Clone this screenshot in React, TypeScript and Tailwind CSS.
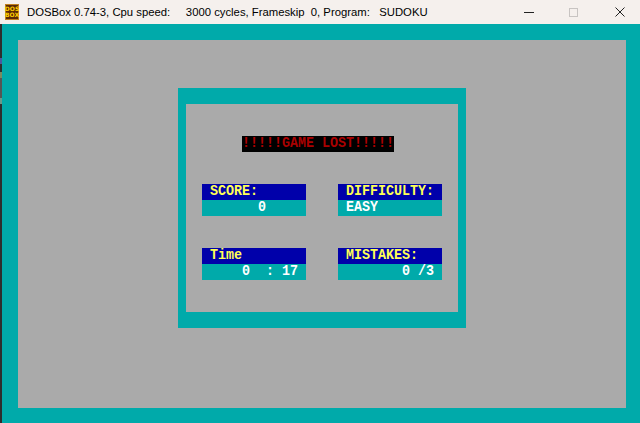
import React from "react";

function T({ children }: { children: React.ReactNode }) {
  return <span className="inline-block h-4 scale-y-[1.13] origin-center">{children}</span>;
}

function Field({ label, value }: { label: string; value: string }) {
  return (
    <div className="w-[104px] flex flex-col">
      <div className="h-4 bg-[#0000aa] text-[#ffff55] leading-4 whitespace-pre"><T>{label}</T></div>
      <div className="h-4 bg-[#00aaaa] text-white leading-4 whitespace-pre"><T>{value}</T></div>
    </div>
  );
}

export default function App() {
  return (
    <div className="w-[640px] h-[423px] overflow-hidden flex flex-col bg-[#00aaaa]">
      <div className="h-6 shrink-0 bg-[#f5f0ed] flex items-center font-['Liberation_Sans',Arial,sans-serif] text-[11.3px] text-black">
        <div className="ml-[5px] w-[14px] h-[16px] bg-[#5a2a06] border border-[#c08020] flex flex-col items-center justify-center leading-[6px] text-[6px] font-bold text-[#ffd000] font-['DejaVu_Sans',sans-serif]">
          <span>DOS</span>
          <span>BOX</span>
        </div>
        <span className="ml-[8px] whitespace-pre">DOSBox 0.74-3, Cpu speed:     3000 cycles, Frameskip  0, Program:   SUDOKU</span>
        <div className="ml-auto flex items-center">
          <div className="w-[10px] h-px bg-[#222]" />
          <div className="ml-[35px] w-[9px] h-[9px] border border-[#c8c4c2]" />
          <svg className="ml-[37px] mr-[15px]" width="10" height="10" viewBox="0 0 10 10">
            <path d="M0.5 0.5 L9.5 9.5 M9.5 0.5 L0.5 9.5" stroke="#222" strokeWidth="1" />
          </svg>
        </div>
      </div>
      <div className="flex-1 flex">
        <div className="w-[2px] bg-[#2e2e2e] flex flex-col">
          <div className="h-[34px]" />
          <div className="h-[6px] bg-[#4a5aa0]" />
          <div className="h-[8px]" />
          <div className="h-[6px] bg-[#7a8a60]" />
          <div className="h-[20px] bg-[#555]" />
          <div className="h-[6px] bg-[#6a9a8a]" />
        </div>
        <div className="flex-1 flex pl-4 pt-4 pr-[14px] pb-[15px]">
          <div className="flex-1 bg-[#aaaaaa] pl-[160px] pt-[48px] font-['Liberation_Mono',monospace] font-bold text-[13.333px]">
            <div className="w-[288px] h-[240px] bg-[#00aaaa] px-2 py-4">
              <div className="h-full bg-[#aaaaaa] pl-4 pt-8 flex flex-col">
                <div className="ml-[40px] w-[152px] h-4 bg-black text-[#aa0000] leading-4 whitespace-pre"><T>!!!!!GAME LOST!!!!!</T></div>
                <div className="mt-8 grid grid-cols-[104px_104px] gap-x-8 gap-y-8">
                  <Field label=" SCORE:" value="       0" />
                  <Field label=" DIFFICULTY:" value=" EASY" />
                  <Field label=" Time" value="     0  : 17" />
                  <Field label=" MISTAKES:" value="        0 /3" />
                </div>
              </div>
            </div>
          </div>
        </div>
      </div>
    </div>
  );
}
